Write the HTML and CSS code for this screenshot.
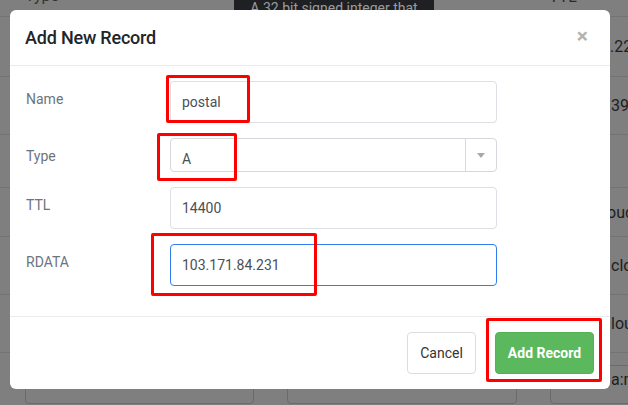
FILE: index.html
```html
<!DOCTYPE html>
<html>
<head>
<meta charset="utf-8">
<link rel="stylesheet" href="styles.css">
</head>
<body>
<div class="bg">
  <div class="bg-head">
    <span class="bg-head-type">Type</span>
    <span class="bg-head-ttl">TTL</span>
    <div class="tip">A 32 bit signed integer that</div>
  </div>
  <div class="bg-row r1"><span class="bg-cell c1">9.22</span></div>
  <div class="bg-row r2"><span class="bg-cell c2">39.</span></div>
  <div class="bg-row r3"><span class="bg-cell"></span></div>
  <div class="bg-row r4"><span class="bg-cell c4">oud</span></div>
  <div class="bg-row r5"><span class="bg-cell c5">clou</span></div>
  <div class="bg-row r6"><span class="bg-cell c6">lou</span></div>
  <div class="bg-boxes">
    <div class="bg-box b1"></div>
    <div class="bg-box b2"></div>
    <div class="bg-box b3"><span>a:m</span></div>
  </div>
</div>

<div class="modal">
  <div class="modal-header">
    <h4 class="modal-title">Add New Record</h4>
    <span class="close">&times;</span>
  </div>
  <div class="modal-body">
    <div class="form-row">
      <label class="form-label">Name</label>
      <div class="form-input">postal</div>
    </div>
    <div class="form-row">
      <label class="form-label">Type</label>
      <div class="form-select">
        <span class="select-value">A</span>
        <span class="select-arrow"><svg width="8" height="5" viewBox="0 0 8 5"><path d="M0 0 L8 0 L4 5 Z" fill="#a8a8a8"/></svg></span>
      </div>
    </div>
    <div class="form-row">
      <label class="form-label">TTL</label>
      <div class="form-input">14400</div>
    </div>
    <div class="form-row last">
      <label class="form-label">RDATA</label>
      <div class="form-input focus">103.171.84.231</div>
    </div>
  </div>
  <div class="modal-footer">
    <button class="btn btn-cancel">Cancel</button>
    <button class="btn btn-add">Add Record</button>
  </div>
</div>

<div class="mark mark-name"></div>
<div class="mark mark-type"></div>
<div class="mark mark-rdata"></div>
<div class="mark mark-add"></div>
</body>
</html>
```
FILE: styles.css
```css
* { box-sizing: border-box; }
html, body { margin: 0; padding: 0; }
body {
  width: 628px;
  height: 405px;
  overflow: hidden;
  position: relative;
  background: #7f7f7f;
  font-family: Roboto, "Liberation Sans", sans-serif;
}

/* dimmed page behind the modal */
.bg { width: 628px; }
.bg-head {
  position: relative;
  height: 17px;
  border-bottom: 1px solid #737373;
  display: flex;
  font-size: 16px;
  color: #333;
}
.bg-head-type { margin-left: 25px; margin-top: -14px; }
.bg-head-ttl { margin-left: 490px; margin-top: -13px; color: #2a2a2a; }
.tip {
  position: absolute;
  left: 234px;
  top: -12px;
  width: 200px;
  height: 40px;
  background: #1f2023;
  color: #9c9c9c;
  font-size: 14px;
  text-align: center;
  padding-top: 10px;
  line-height: 20px;
}
.bg-row {
  border-bottom: 1px solid #737373;
  display: flex;
  align-items: center;
  font-size: 16px;
  color: #1e1e1e;
  white-space: nowrap;
}
.r1 { height: 60px; }
.r2 { height: 58px; }
.r3 { height: 53px; }
.r4 { height: 49px; }
.r5 { height: 58px; }
.r6 { height: 58px; }
.bg-cell { margin-left: 601px; }
.c2 { margin-left: 611px; }
.c4 { margin-left: 607px; }
.c5 { margin-left: 611px; }
.c6 { margin-left: 611px; }
.bg-boxes {
  display: flex;
  gap: 33px;
  padding-left: 25px;
  margin-top: 12px;
}
.bg-box {
  flex-shrink: 0;
  height: 39px;
  width: 229px;
  border: 1px solid #6b6b6b;
  border-radius: 4px;
  font-size: 16px;
  color: #1e1e1e;
  white-space: nowrap;
}
.b2 { width: 230px; }
.b3 { width: 200px; padding-left: 60px; padding-top: 4px; }

/* modal */
.modal {
  position: absolute;
  left: 10px;
  top: 10px;
  width: 600px;
  background: #fff;
  border-radius: 6px;
}
.modal-header {
  height: 56px;
  border-bottom: 1px solid #e9ecef;
  display: flex;
  align-items: center;
  justify-content: space-between;
  padding: 0 22px 0 15px;
}
.modal-title {
  margin: 0;
  font-size: 18px;
  font-weight: 500;
  color: #212529;
  letter-spacing: -0.2px;
}
.close {
  font-size: 21px;
  font-weight: 700;
  color: #b3b3b3;
  line-height: 1;
  margin-top: -2px;
}
.modal-body { padding: 15px 0 15px 16px; }
.form-row {
  display: grid;
  grid-template-columns: 144px 327px;
  margin-bottom: 15px;
}
.form-row.last { margin-bottom: 15px; }
.form-label {
  font-size: 14px;
  color: #6c757d;
  line-height: 21px;
  padding-top: 8px;
}
.form-input {
  height: 42px;
  border: 1px solid #dcdfe3;
  border-radius: 4px;
  padding: 0 11px;
  display: flex;
  align-items: center;
  font-size: 14px;
  color: #495057;
}
.form-input.focus { border-color: #2f7ef0; }
.form-select {
  height: 34px;
  border: 1px solid #d5d8dc;
  border-radius: 4px;
  display: flex;
  font-size: 14px;
  color: #495057;
}
.select-value {
  flex: 1;
  padding: 8px 11px 0;
  display: flex;
  align-items: center;
}
.select-arrow {
  width: 31px;
  border-left: 1px solid #d5d8dc;
  display: flex;
  align-items: center;
  justify-content: center;
}
.modal-footer {
  border-top: 1px solid #e9ecef;
  padding: 15px 16px 15px 0;
  display: flex;
  justify-content: flex-end;
  gap: 19px;
}
.btn {
  height: 42px;
  border-radius: 4px;
  font-family: Roboto, "Liberation Sans", sans-serif;
  font-size: 14px;
  padding: 0;
  white-space: nowrap;
  cursor: pointer;
}
.btn-cancel {
  width: 69px;
  background: #fff;
  border: 1px solid #dddddd;
  color: #333;
}
.btn-add {
  width: 99px;
  background: #5cb85c;
  border: 1px solid #54b254;
  color: #fff;
  font-weight: 700;
}

/* red annotation boxes */
.mark {
  position: absolute;
  border: 3px solid #ff0000;
  border-radius: 2px;
}
.mark-name { left: 166px; top: 75px; width: 84px; height: 48px; }
.mark-type { left: 157px; top: 133px; width: 80px; height: 48px; }
.mark-rdata { left: 151px; top: 233px; width: 166px; height: 63px; }
.mark-add { left: 486px; top: 318px; width: 116px; height: 64px; }
```
